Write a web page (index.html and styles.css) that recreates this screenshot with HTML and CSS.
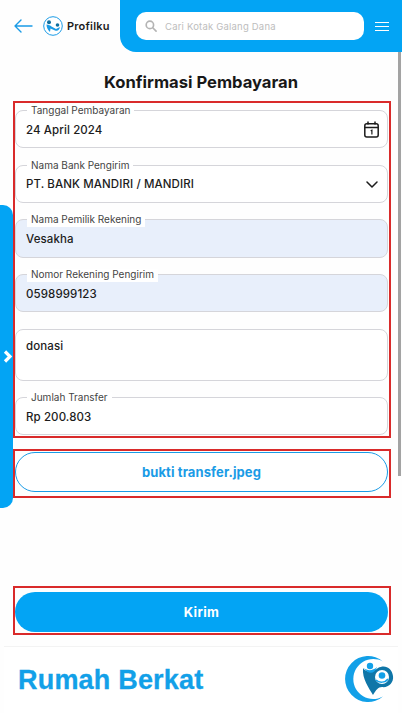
FILE: index.html
```html
<!DOCTYPE html>
<html lang="en">
<head>
    <meta charset="UTF-8">
    <meta name="viewport" content="width=device-width, initial-scale=1.0">
    <title>Konfirmasi Pembayaran</title>
    <link rel="stylesheet" href="styles.css">
</head>
<body>
    <div class="page">
        <!-- Header -->
        <header class="topbar">
            <div class="topbar-left">
                <svg class="back-icon" width="19" height="14" viewBox="0 0 19 14" fill="none" stroke="#1a9be6" stroke-width="1.4" stroke-linecap="round" stroke-linejoin="round">
                    <path d="M1 7H18M7 1L1 7L7 13"/>
                </svg>
                <svg class="profile-logo" width="20" height="20" viewBox="0 0 20 20">
                    <circle cx="10" cy="10" r="9.3" fill="#fff" stroke="#1a9be6" stroke-width="1"/>
                    <circle cx="6" cy="6.2" r="2" fill="#0f6f9f"/>
                    <circle cx="14.5" cy="9" r="1.8" fill="#0f6f9f"/>
                    <path d="M3.5 8.5C5.500 9 7.500 9 8.500 10.500L13 13L17 11C16.500 14 14.500 15.500 12 14.500L7.500 12.500L7 16C5 14 3.500 11.500 3.500 8.500Z" fill="#1a9be6"/>
                </svg>
                <span class="profile-name">Profilku</span>
            </div>
            <div class="topbar-right">
                <div class="search">
                    <svg width="12" height="12" viewBox="0 0 13 13" fill="none" stroke="#b4b4b4" stroke-width="1.8" stroke-linecap="round">
                        <circle cx="5.3" cy="5.3" r="4"/>
                        <path d="M8.4 8.4L12 12"/>
                    </svg>
                    <span>Cari Kotak Galang Dana</span>
                </div>
                <div class="menu-icon"><i></i><i></i><i></i></div>
            </div>
        </header>

        <h1>Konfirmasi Pembayaran</h1>

        <form class="form">
            <div class="marked fields">
                <div class="field">
                    <label>Tanggal Pembayaran</label>
                    <div class="value">24 April 2024</div>
                    <svg class="cal-icon" width="15" height="17" viewBox="0 0 15 17" fill="none" stroke="#1c1c1c" stroke-width="1.5">
                        <rect x="0.8" y="2.700" width="13.400" height="13.300" rx="2"/>
                        <path d="M0.800 6.600H14.200M4 0.500V3.500M11 0.500V3.500" />
                        <path d="M6.700 9.800L7.900 9.200V13.400" stroke-width="1.2"/>
                    </svg>
                </div>
                <div class="field">
                    <label>Nama Bank Pengirim</label>
                    <div class="value">PT. BANK MANDIRI / MANDIRI</div>
                    <svg width="12" height="7" viewBox="0 0 12 7" fill="none" stroke="#1c1c1c" stroke-width="1.5" stroke-linecap="round" stroke-linejoin="round">
                        <path d="M1 1L6 6L11 1"/>
                    </svg>
                </div>
                <div class="field filled">
                    <label>Nama Pemilik Rekening</label>
                    <div class="value">Vesakha</div>
                </div>
                <div class="field filled">
                    <label>Nomor Rekening Pengirim</label>
                    <div class="value">0598999123</div>
                </div>
                <div class="field note">
                    <div class="value">donasi</div>
                </div>
                <div class="field">
                    <label>Jumlah Transfer</label>
                    <div class="value">Rp 200.803</div>
                </div>
            </div>

            <div class="marked upload-box">
                <button type="button" class="btn btn-outline">bukti transfer.jpeg</button>
            </div>

            <div class="marked submit-box">
                <button type="submit" class="btn btn-primary">Kirim</button>
            </div>
        </form>

        <footer class="footer">
            <span class="brand">Rumah Berkat</span>
            <svg width="50" height="48" viewBox="0 0 50 48">
                <path d="M38 6.500A23 23 0 1 0 38 41.500A20 20 0 1 1 38 6.500Z" fill="#12a0e8"/>
                <path d="M18 13C21 18 28 17 33 13C40 9 47 13 48 21C49 28 43 33 37 32C33 32 31 35 28 40C24 33 17 24 18 13Z" fill="#0f76a8"/>
                <circle cx="25" cy="11" r="3.200" fill="#12a0e8"/>
                <path d="M19 13C22 16 28 16 32 12C30 19 23 20 19 13Z" fill="#12a0e8"/>
                <circle cx="37" cy="22" r="7" fill="#fff"/>
                <circle cx="37" cy="20.500" r="3.300" fill="#12a0e8"/>
                <path d="M31 25C34 28 40 28 43 24" fill="none" stroke="#12a0e8" stroke-width="1.500"/>
            </svg>
        </footer>

        <!-- Overlays -->
        <div class="side-tab">
            <svg width="10" height="13" viewBox="0 0 10 13" fill="none" stroke="#fff" stroke-width="3.200" stroke-linejoin="miter">
                <path d="M2 1.500L7 6.500L2 11.500"/>
            </svg>
        </div>
        <div class="scrollbar"></div>
    </div>
</body>
</html>
```

FILE: styles.css
```css
* { box-sizing: border-box; }
body { margin: 0; font-family: Inter, "Noto Sans", sans-serif; color: #1c1c1c; background: #fff; }
.page { position: relative; width: 402px; height: 713px; overflow: hidden; display: flex; flex-direction: column; background: #fefefe; }

.topbar { display: flex; height: 52px; flex-shrink: 0; }
.topbar-left { width: 120px; flex-shrink: 0; display: flex; align-items: center; padding-left: 14px; }
.back-icon { margin-right: 10px; }
.profile-name { margin-left: 4px; font-size: 11px; font-weight: 600; letter-spacing: 0.2px; }
.topbar-right { flex: 1; display: flex; align-items: center; padding: 0 13px 0 16px; background: #03a4f4; border-bottom-left-radius: 16px; }
.search { width: 228px; height: 28px; display: flex; align-items: center; gap: 8px; padding-left: 9px; background: #fff; border-radius: 10px; font-size: 9.500px; letter-spacing: 0.2px; color: #bdbdbd; }
.menu-icon { margin-left: 11px; width: 14px; display: flex; flex-direction: column; gap: 3px; }
.menu-icon i { display: block; height: 1px; background: #fff; }

h1 { margin: 20px 0 0; height: 21px; line-height: 21px; text-align: center; font-size: 16.600px; font-weight: 700; color: #181818; }

.form { display: flex; flex-direction: column; padding: 8px 11px 0 13px; }
.marked { border: 2px solid #d92a2a; }
.fields { height: 337px; padding: 7px 1px 0 0; display: flex; flex-direction: column; gap: 16.300px; }

.field { position: relative; height: 38.400px; flex-shrink: 0; display: flex; align-items: center; justify-content: space-between; padding: 1px 9px 0 10px; background: #fff; border: 1px solid #d5d5da; border-radius: 8px; }
.field label { position: absolute; left: 11px; top: -6px; padding: 0 4px; height: 12.500px; line-height: 11px; background: #fff; font-size: 10px; color: #444; white-space: nowrap; }
.field.filled { background: #e8effb; }
.field.note { height: 52px; align-items: flex-start; padding-top: 9px; }
.value { font-size: 11.500px; font-weight: 500; letter-spacing: 0.1px; }
.cal-icon { margin-right: -1px; }

.btn { display: block; width: 100%; height: 40px; border-radius: 20px; font-family: inherit; font-size: 13px; font-weight: 700; letter-spacing: 0.1px; }
.btn-outline { background: #fff; border: 1px solid #1a9be6; color: #1a9be6; }
.btn-primary { background: #03a4f4; border: none; color: #fff; letter-spacing: 0.4px; }
.upload-box { margin-top: 11px; height: 49px; padding: 1px 1px 0 0; }
.submit-box { margin-top: 88px; height: 49px; padding: 4px 1px 0 0; }

.footer { margin: 11px 4px 0; flex: 1; display: flex; align-items: center; justify-content: space-between; padding: 0 3px 2px 14px; border-top: 1px solid #f3f3f3; background: #fff; }
.brand { margin-top: 3px; font-family: "Liberation Sans", sans-serif; font-size: 27px; font-weight: 700; color: #12a0e8; letter-spacing: 0.2px; -webkit-text-stroke: 0.3px #12a0e8; }

.side-tab { position: absolute; left: 0; top: 205px; width: 13px; height: 303px; display: flex; align-items: center; padding-left: 3px; background: #03a4f4; border-radius: 0 10px 10px 0; }
.scrollbar { position: absolute; right: 1px; top: 52px; width: 3px; height: 424px; background: #a3a3a3; }
```
